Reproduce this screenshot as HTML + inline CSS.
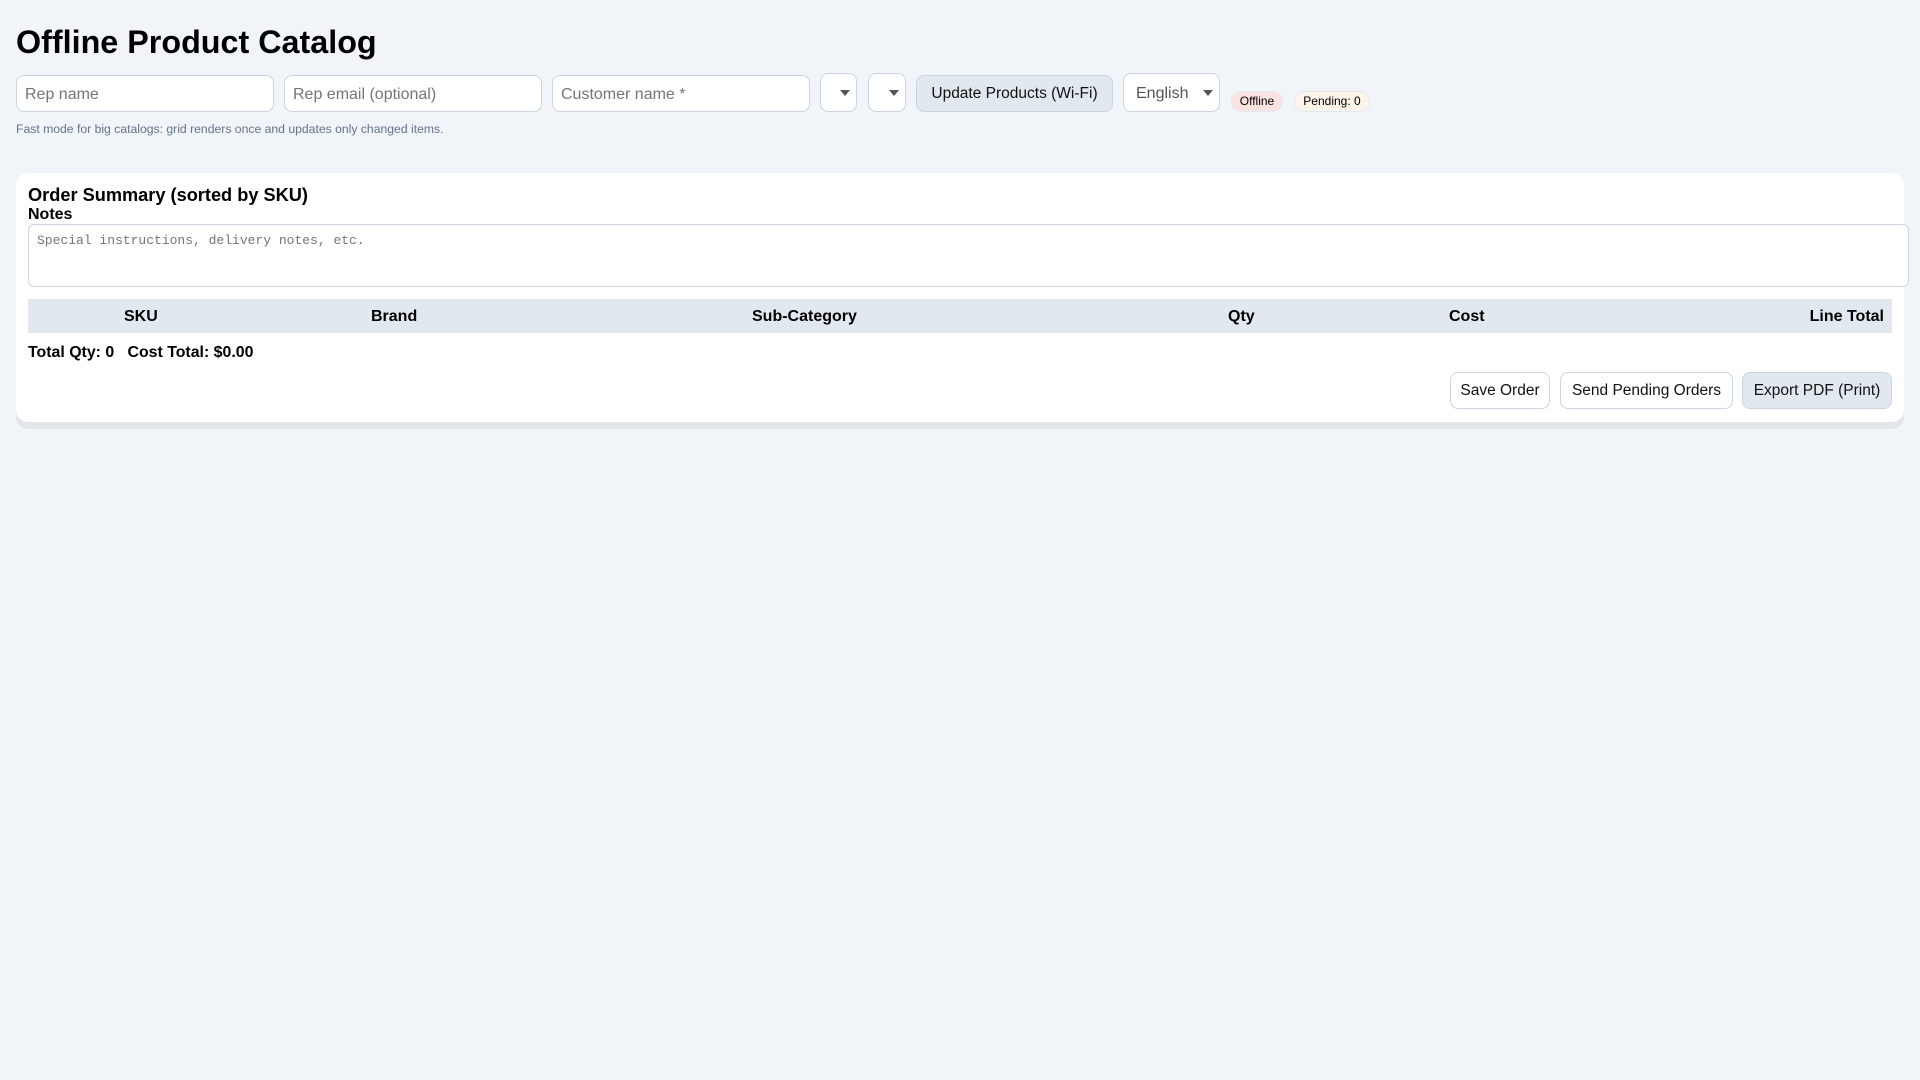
<!DOCTYPE html>
<html><head><style>
*{box-sizing:border-box}
body{margin:0;background:#f1f4f9;font-family:"Liberation Sans",Arial,sans-serif;color:#000;width:1920px;height:1080px;position:relative;overflow:hidden}
.a{position:absolute}
h1{position:absolute;left:16px;top:20px;margin:0;font-size:32.3px;font-weight:bold;line-height:44px}
.in{position:absolute;top:75px;height:37px;background:#fff;border:1px solid #cbd5e1;border-radius:8px;font-size:16px;color:#757575;padding:10px 8px;line-height:18px}
.sel{position:absolute;top:73px;height:39px;background:#fff;border:1px solid #cbd5e1;border-radius:8px}
.tri{position:absolute;right:6px;top:16px;width:0;height:0;border-left:5px solid transparent;border-right:5px solid transparent;border-top:6px solid #555}
.btn{position:absolute;height:37px;border:1px solid #cbd5e1;border-radius:8px;background:#fff;font-size:15.5px;text-align:center;line-height:36px;color:#111}
.badge{position:absolute;top:91px;height:21px;border:1px solid #e2e8f0;border-radius:11px;font-size:12px;line-height:19px;text-align:center}
.th{position:absolute;top:300px;font-size:16px;font-weight:bold;line-height:34px}
</style></head><body>
<h1>Offline Product Catalog</h1>
<div class="in" style="left:16px;width:258px">Rep name</div>
<div class="in" style="left:284px;width:258px">Rep email (optional)</div>
<div class="in" style="left:552px;width:258px">Customer name *</div>
<div class="sel" style="left:820px;width:37px"><div class="tri"></div></div>
<div class="sel" style="left:868px;width:38px"><div class="tri"></div></div>
<div class="btn" style="left:916px;top:75px;width:197px;background:#e2e8f0">Update Products (Wi-Fi)</div>
<div class="sel" style="left:1123px;width:97px;font-size:16px;color:#555;padding:11px 12px;line-height:18px">English<div class="tri"></div></div>
<div class="badge" style="left:1231px;width:52px;background:#fde2e2">Offline</div>
<div class="badge" style="left:1294px;width:76px;background:#fdf4ea">Pending: 0</div>
<div class="a" style="left:16px;top:122px;font-size:12.2px;color:#64748b">Fast mode for big catalogs: grid renders once and updates only changed items.</div>

<div class="a" style="left:16px;top:173px;width:1888px;height:256px;background:#e2e6eb;border-radius:12px"></div>
<div class="a" style="left:16px;top:173px;width:1888px;height:249px;background:#fff;border-radius:12px"></div>
<div class="a" style="left:28px;top:185px;font-size:18.2px;font-weight:bold">Order Summary (sorted by SKU)</div>
<div class="a" style="left:28px;top:206px;font-size:16px;font-weight:bold">Notes</div>
<div class="a" style="left:28px;top:224px;width:1881px;height:63px;border:1px solid #cbd5e1;border-radius:6px;background:#fff;font-family:'Liberation Mono',monospace;font-size:13px;color:#757575;padding:8px 8px">Special instructions, delivery notes, etc.</div>
<div class="a" style="left:28px;top:299px;width:1864px;height:34px;background:#e2e8f0"></div>
<div class="th" style="left:124px">SKU</div>
<div class="th" style="left:371px">Brand</div>
<div class="th" style="left:752px">Sub-Category</div>
<div class="th" style="left:1228px">Qty</div>
<div class="th" style="left:1449px">Cost</div>
<div class="th" style="right:36px">Line Total</div>
<div class="a" style="left:28px;top:343px;font-size:15.9px;font-weight:bold;line-height:20px">Total Qty: 0&nbsp;&nbsp;&nbsp;Cost Total: $0.00</div>
<div class="btn" style="left:1450px;top:372px;width:100px">Save Order</div>
<div class="btn" style="left:1560px;top:372px;width:173px">Send Pending Orders</div>
<div class="btn" style="left:1742px;top:372px;width:150px;background:#e2e8f0">Export PDF (Print)</div>
</body></html>
